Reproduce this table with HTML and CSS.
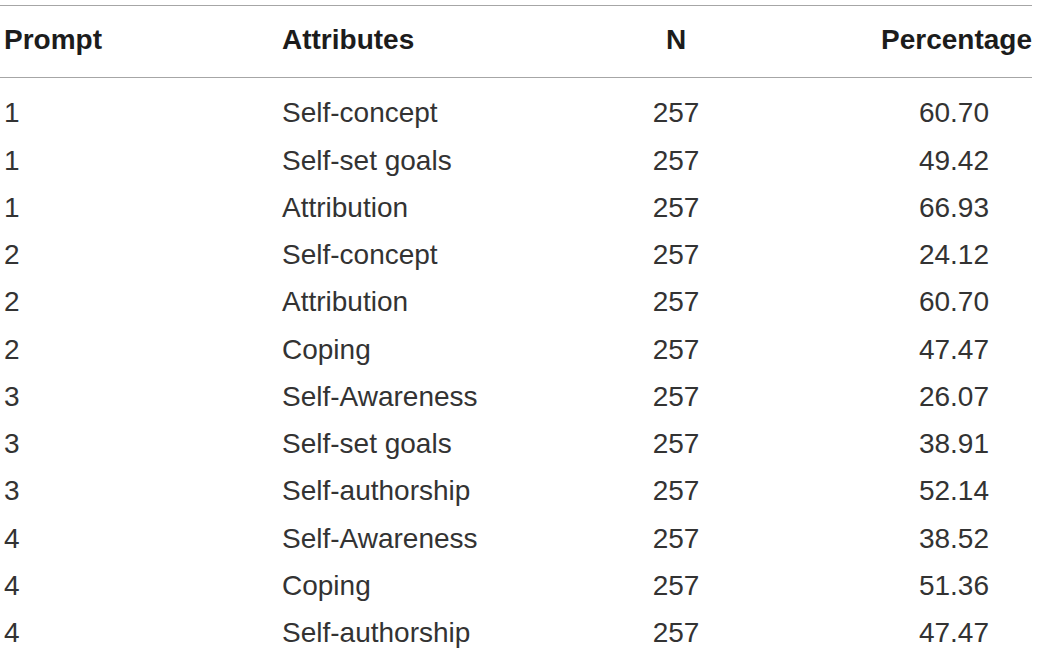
FILE: index.html
```html
<!DOCTYPE html>
<html>
<head>
<meta charset="utf-8">
<link rel="stylesheet" href="styles.css">
</head>
<body>
<div class="table">
  <div class="row head">
    <div class="c1">Prompt</div><div class="c2">Attributes</div><div class="c3">N</div><div class="c4">Percentage</div>
  </div>
  <div class="body">
    <div class="row"><div class="c1">1</div><div class="c2">Self-concept</div><div class="c3">257</div><div class="c4">60.70</div></div>
    <div class="row"><div class="c1">1</div><div class="c2">Self-set goals</div><div class="c3">257</div><div class="c4">49.42</div></div>
    <div class="row"><div class="c1">1</div><div class="c2">Attribution</div><div class="c3">257</div><div class="c4">66.93</div></div>
    <div class="row"><div class="c1">2</div><div class="c2">Self-concept</div><div class="c3">257</div><div class="c4">24.12</div></div>
    <div class="row"><div class="c1">2</div><div class="c2">Attribution</div><div class="c3">257</div><div class="c4">60.70</div></div>
    <div class="row"><div class="c1">2</div><div class="c2">Coping</div><div class="c3">257</div><div class="c4">47.47</div></div>
    <div class="row"><div class="c1">3</div><div class="c2">Self-Awareness</div><div class="c3">257</div><div class="c4">26.07</div></div>
    <div class="row"><div class="c1">3</div><div class="c2">Self-set goals</div><div class="c3">257</div><div class="c4">38.91</div></div>
    <div class="row"><div class="c1">3</div><div class="c2">Self-authorship</div><div class="c3">257</div><div class="c4">52.14</div></div>
    <div class="row"><div class="c1">4</div><div class="c2">Self-Awareness</div><div class="c3">257</div><div class="c4">38.52</div></div>
    <div class="row"><div class="c1">4</div><div class="c2">Coping</div><div class="c3">257</div><div class="c4">51.36</div></div>
    <div class="row"><div class="c1">4</div><div class="c2">Self-authorship</div><div class="c3">257</div><div class="c4">47.47</div></div>
  </div>
</div>
</body>
</html>
```

FILE: styles.css
```css
html, body {
  margin: 0;
  padding: 0;
  background: #ffffff;
}
body {
  font-family: "Liberation Sans", Arial, sans-serif;
  font-size: 28px;
  color: #333333;
  overflow: hidden;
}
.table {
  width: 1032px;
  padding-top: 5px;
}
.row {
  display: grid;
  grid-template-columns: 278px 302px 192px 260px;
  line-height: 47.27px;
  height: 47.27px;
}
.head {
  border-top: 1px solid #a6a6a6;
  border-bottom: 1px solid #a6a6a6;
  padding-top: 10px;
  padding-bottom: 14px;
  font-weight: bold;
  color: #1c1c1c;
}
.body {
  padding-top: 11px;
}
.c1 { padding-left: 4px; }
.c2 { padding-left: 4px; }
.c3 { text-align: center; }
.c4 { text-align: right; padding-right: 43px; }
.head .c4 { padding-right: 0; }
```
